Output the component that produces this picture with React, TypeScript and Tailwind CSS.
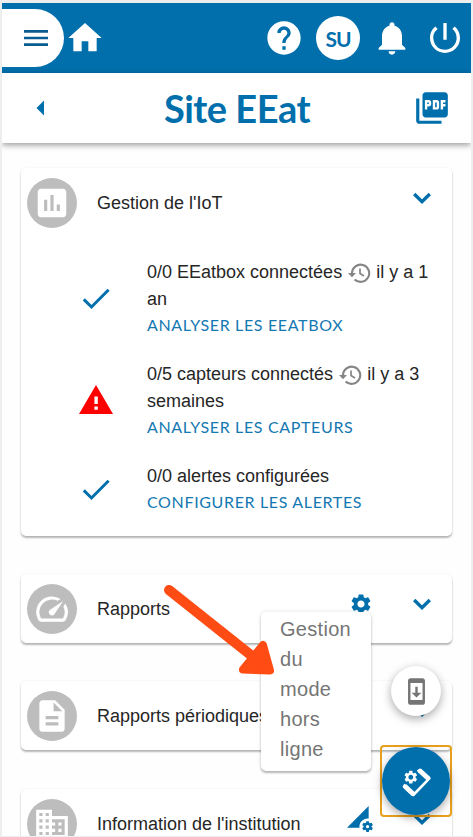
import React from 'react';
import {
  MdArrowLeft,
  MdAssessment,
  MdBusiness,
  MdDescription,
  MdHelp,
  MdHome,
  MdMenu,
  MdNotifications,
  MdPermDataSetting,
  MdPictureAsPdf,
  MdPowerSettingsNew,
  MdSettings,
  MdSpeed,
  MdSystemUpdate,
} from 'react-icons/md';

const Chevron = () => (
  <svg width="36" height="36" viewBox="0 0 36 36" fill="none" className="ml-[31px]">
    <path d="M10.2 14 L18 21.6 L25.8 14" stroke="currentColor" strokeWidth="3.4" />
  </svg>
);

const CheckIcon = () => (
  <svg width="36" height="36" viewBox="0 0 36 36" fill="none" className="text-[#006fac]">
    <path d="M5.8 19.4 L13.5 27 L30.6 9.8" stroke="currentColor" strokeWidth="3" />
  </svg>
);

const WarningIcon = () => (
  <svg width="36" height="36" viewBox="0 0 36 36">
    <path d="M18 3 L35 32 H1 Z" fill="#ff0000" />
    <path d="M16.4 14.5 h3.4 v7.5 h-3.4 Z M16.4 24.5 h3.4 v3.2 h-3.4 Z" fill="white" />
  </svg>
);

const HistoryIcon = () => (
  <svg width="24" height="24" viewBox="0 0 24 24" fill="none" className="-mt-px inline align-middle text-[#858585]">
    <path d="M5 12 A8.6 8.6 0 1 1 7.6 18.4" stroke="currentColor" strokeWidth="2.1" />
    <path d="M1 12 H9 L5 16.2 Z" fill="currentColor" />
    <path d="M13 7.5 V12.5 L17 15" stroke="currentColor" strokeWidth="1.7" />
  </svg>
);

// Tilted phone with a gear over its upper corner
const DeviceSettingsIcon = () => (
  <svg width="34" height="34" viewBox="0 0 34 34" fill="none" stroke="white" strokeLinejoin="round">
    <path d="M18.5 7.5 L21 5.8 L30.4 14.4 L14.3 31 L5 22.3 L6.5 20.5" strokeWidth="2.6" />
    <path d="M20.5 6.5 L29.8 15" strokeWidth="4.8" />
    <path d="M5.4 21.8 L14.5 30.2" strokeWidth="4.8" />
    <MdSettings x={3.8} y={5.2} width={16.6} height={16.6} fill="white" stroke="none" />
  </svg>
);

interface StatusRowProps {
  ok: boolean;
  label: string;
  since?: string;
  action: string;
}

const StatusRow: React.FC<StatusRowProps> = ({ ok, label, since, action }) => (
  <div className="flex items-center">
    <div className="flex w-[126px] shrink-0 justify-center pl-[24px]">{ok ? <CheckIcon /> : <WarningIcon />}</div>
    <div className="w-[290px]">
      <p className="text-[18px] leading-[27px] text-[#262626]">
        {label}
        {since && (
          <>
            {' '}
            <HistoryIcon /> {since}
          </>
        )}
      </p>
      <a className="block font-['Lato'] text-[16px] leading-[24px] tracking-[0.65px] text-[#1478b2]">{action}</a>
    </div>
  </div>
);

interface PanelProps {
  icon: React.ReactNode;
  title: string;
  extra?: React.ReactNode;
  children?: React.ReactNode;
  className?: string;
}

const Panel: React.FC<PanelProps> = ({ icon, title, extra, children, className = '' }) => (
  <section className={`mx-[19px] shrink-0 rounded-[5px] bg-white shadow-[0_2px_2px_rgba(0,0,0,0.28),0_0_2px_rgba(0,0,0,0.08)] ${className}`}>
    <div className="flex h-[69px] items-center pl-[6px]">
      <div className="flex h-[50px] w-[50px] items-center justify-center rounded-full bg-[#bdbdbd] text-white">{icon}</div>
      <h2 className="ml-[20px] flex-1 whitespace-nowrap pt-[1px] text-[18px] text-[#262626]">{title}</h2>
      <div className="flex items-center pr-[12px] pb-[9px] text-[#006fac]">
        {extra}
        <Chevron />
      </div>
    </div>
    {children}
  </section>
);

export default function App() {
  return (
    <div className="relative h-[837px] w-[473px] overflow-hidden bg-[#eeeeee] px-[2px] pt-[3px] pb-[1px] font-['Liberation_Sans',sans-serif]">
      <div className="flex h-full flex-col overflow-hidden bg-[#fefefe]">
        <header className="flex h-[70px] shrink-0 items-center bg-[#006fac] text-white">
          <button className="flex h-[58px] w-[62px] items-center justify-end rounded-r-full bg-white pr-[12px] text-[#0b5c90]">
            <MdMenu size={32} />
          </button>
          <MdHome size={40} className="ml-[1px]" />
          <div className="ml-auto flex items-center pr-[6px]">
            <MdHelp size={40} />
            <div className="ml-[12px] flex h-[44px] w-[44px] items-center justify-center rounded-full bg-white pt-[2px] font-['Lato'] text-[21px] font-bold tracking-[-1px] text-[#006fac]">
              SU
            </div>
            <MdNotifications size={40} className="ml-[12px]" />
            <MdPowerSettingsNew size={40} className="ml-[13px]" />
          </div>
        </header>

        <div className="relative flex h-[70px] shrink-0 items-center justify-between bg-white pr-[20px] pl-[21px] text-[#006fac] shadow-[0_2px_6px_rgba(0,0,0,0.4)]">
          <MdArrowLeft size={36} />
          <h1 className="pl-[2px] font-['Lato'] text-[38px] font-bold tracking-[-0.5px]">Site EEat</h1>
          <MdPictureAsPdf size={38} />
        </div>

        <main className="flex flex-col pt-[25px]">
          <Panel icon={<MdAssessment size={38} />} title="Gestion de l'IoT" className="h-[368px]">
            <div className="flex flex-col gap-[24px] pt-[22px]">
              <StatusRow ok label="0/0 EEatbox connectées" since="il y a 1 an" action="ANALYSER LES EEATBOX" />
              <StatusRow ok={false} label="0/5 capteurs connectés" since="il y a 3 semaines" action="ANALYSER LES CAPTEURS" />
              <StatusRow ok label="0/0 alertes configurées" action="CONFIGURER LES ALERTES" />
            </div>
          </Panel>
          <Panel icon={<MdSpeed size={38} />} title="Rapports" extra={<MdSettings size={24} />} className="mt-[38px]" />
          <Panel icon={<MdDescription size={38} />} title="Rapports périodiques" extra={<MdSettings size={24} />} className="mt-[38px]" />
          <Panel icon={<MdBusiness size={38} />} title="Information de l'institution" extra={<MdPermDataSetting size={26} />} className="mt-[39px]" />
        </main>
      </div>

      <div className="absolute top-[612px] left-[261px] h-[159px] w-[110px] rounded-[5px] bg-white pt-[2px] pl-[19px] text-[20px] leading-[30px] tracking-[0.3px] text-[#757575] shadow-[0_2px_2px_rgba(0,0,0,0.25),0_0_4px_rgba(0,0,0,0.12)]">
        <p className="w-[75px]">Gestion du mode hors ligne</p>
      </div>
      <button className="absolute top-[666px] left-[391px] flex h-[50px] w-[50px] items-center justify-center rounded-full bg-white text-[#757575] shadow-[0_3px_10px_rgba(0,0,0,0.35)]">
        <MdSystemUpdate size={29} />
      </button>
      <div className="absolute top-[745px] left-[380px] h-[72px] w-[72px] rounded-[4px] border-2 border-[#e8a01c]">
        <button className="flex h-[68px] w-[68px] items-center justify-center rounded-full bg-[#006fac] shadow-[0_3px_8px_rgba(0,0,0,0.35)]">
          <DeviceSettingsIcon />
        </button>
      </div>

      <svg className="absolute top-[580px] left-[158px]" width="120" height="100" viewBox="0 0 120 100">
        <path d="M11 10 L94 76" stroke="#ff4b14" strokeWidth="10" strokeLinecap="round" />
        <path d="M105 65 L112 90.5 L85 89.5 Z" fill="#ff4b14" stroke="#ff4b14" strokeWidth="8" strokeLinejoin="round" />
      </svg>
    </div>
  );
}
